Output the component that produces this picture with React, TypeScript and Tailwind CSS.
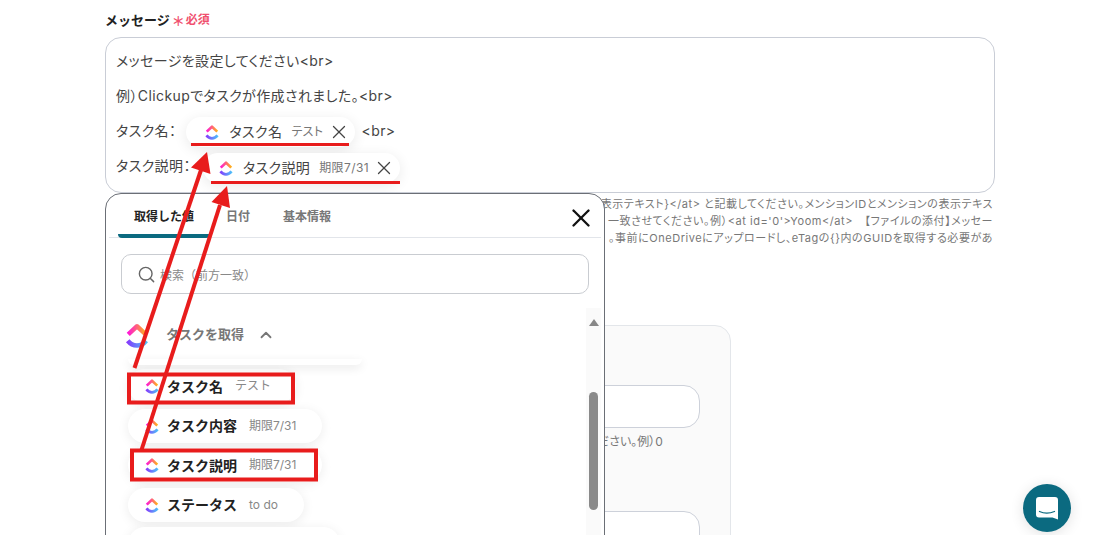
import { ChevronUp, Search, X } from 'lucide-react';

const FONT = "font-['Inter','Noto_Sans_CJK_JP',sans-serif]";

function ClickUpLogo({ size = 18 }: { size?: number }) {
  return (
    <svg width={size} height={size} viewBox="0 0 24 24" fill="none" className="shrink-0">
      <defs>
        <linearGradient id="cu-top" x1="3" y1="10" x2="21" y2="10" gradientUnits="userSpaceOnUse">
          <stop offset="0" stopColor="#ff02f0" />
          <stop offset="1" stopColor="#ffc800" />
        </linearGradient>
        <linearGradient id="cu-bottom" x1="3" y1="19" x2="21" y2="19" gradientUnits="userSpaceOnUse">
          <stop offset="0" stopColor="#8930fd" />
          <stop offset="1" stopColor="#49ccf9" />
        </linearGradient>
      </defs>
      <path d="M5 11.5 12 5l7 6.5" stroke="url(#cu-top)" strokeWidth="3.6" strokeLinejoin="round" />
      <path d="M4.6 16.6C6.5 19 9 20.4 12 20.4s5.5-1.4 7.4-3.8" stroke="url(#cu-bottom)" strokeWidth="3.6" />
    </svg>
  );
}

function ValueChip({ label, value, pad }: { label: string; value: string; pad: string }) {
  return (
    <span className={`flex h-[30px] items-center rounded-full bg-white pr-[5px] shadow-[0_3px_14px_rgba(0,0,0,0.09)] ${pad}`}>
      <ClickUpLogo />
      <span className="ml-[8px] text-[14px] text-[#444] [font-feature-settings:'palt']">{label}</span>
      <span className="ml-[9px] text-[12px] text-[#777] [font-feature-settings:'palt']">{value}</span>
      <X size={22} strokeWidth={1.4} className="ml-[4px] text-[#444]" />
    </span>
  );
}

function ListChip({ label, value, width }: { label: string; value: string; width: string }) {
  return (
    <div className={`flex h-[34px] items-center rounded-full bg-white pl-[15px] shadow-[0_2px_12px_rgba(0,0,0,0.08)] ${width}`}>
      <ClickUpLogo />
      <span className="ml-[6px] text-[14px] font-bold text-[#222]">{label}</span>
      <span className="ml-[12px] text-[12px] text-[#888]">{value}</span>
    </div>
  );
}

function HelpLine({ text }: { text: string }) {
  return <div className="flex h-[17px] justify-end whitespace-nowrap text-[11px] leading-[17px] tracking-[0.55px] text-[#777] [font-feature-settings:'palt']">{text}</div>;
}

function VariablePopup() {
  return (
    <div className="absolute left-[105px] top-[193px] h-[360px] w-[500px] rounded-t-2xl border border-[#6b6f76] bg-white">
      <div className="mx-[3px] flex h-[44px] items-start border-b border-[#e2e5ea] pl-[9px] pr-[5px]">
        <div className="flex h-[44px] w-[92px] justify-center rounded-b-sm border-b-[4px] border-[#0b6a80] pt-[14px] text-[12px] font-bold leading-[18px] text-[#222]">取得した値</div>
        <div className="ml-[16px] pt-[14px] text-[12px] font-bold leading-[18px] text-[#777]">日付</div>
        <div className="ml-[33px] pt-[14px] text-[12px] font-bold leading-[18px] text-[#777]">基本情報</div>
        <X size={30} strokeWidth={1.9} className="ml-auto mt-[9px] text-[#111]" />
      </div>
      <div className="mx-[15px] mt-[16px] flex h-[40px] items-center rounded-[10px] border border-[#c9ccd1] pl-[15px]">
        <Search size={19} strokeWidth={1.8} className="text-[#666]" />
        <span className="ml-[4px] mt-[3px] text-[12px] text-[#888]">検索（前方一致）</span>
      </div>
      <div className="relative mt-[16px]">
        <div className="ml-[16px] flex h-[49px] items-center">
          <ClickUpLogo size={30} />
          <span className="ml-[14px] text-[13px] font-bold text-[#777]">タスクを取得</span>
          <ChevronUp size={18} strokeWidth={2.4} className="ml-[13px] text-[#777]" />
        </div>
        <div className="h-[6px] w-[234px] translate-x-[22px] rounded-b-xl bg-white shadow-[0_3px_10px_rgba(0,0,0,0.1)]" />
        <div className="ml-[22px] mt-[4px] flex flex-col gap-[5.5px]">
          <ListChip label="タスク名" value="テスト" width="w-[168px]" />
          <ListChip label="タスク内容" value="期限7/31" width="w-[194px]" />
          <ListChip label="タスク説明" value="期限7/31" width="w-[194px]" />
          <ListChip label="ステータス" value="to do" width="w-[176px]" />
          <ListChip label="" value="" width="w-[212px]" />
        </div>
        {/* scrollbar */}
        <div className="absolute right-[3px] top-[-2px] h-[240px] w-[15px] bg-[#fafafa]">
          <div className="mx-auto mt-[11px] h-0 w-0 border-x-[5px] border-b-[7px] border-x-transparent border-b-[#888]" />
          <div className="mx-auto mt-[66px] h-[118px] w-[9px] rounded-full bg-[#8a8a8a]" />
        </div>
      </div>
    </div>
  );
}

function Annotations() {
  return (
    <svg width="1093" height="535" viewBox="0 0 1093 535" fill="none" className="pointer-events-none absolute left-0 top-0">
      <rect x="191" y="143" width="158" height="3" fill="#e81c1c" />
      <rect x="211" y="181" width="189" height="3" fill="#e81c1c" />
      <rect x="129" y="374.5" width="164" height="28" stroke="#e81c1c" strokeWidth="4" />
      <rect x="132" y="450.5" width="184" height="29" stroke="#e81c1c" strokeWidth="4" />
      <path d="M134.5 368 201 170" stroke="#e81c1c" strokeWidth="4" />
      <path d="M207 152 210.5 174 191 167.5Z" fill="#e81c1c" />
      <path d="M141.500 450 220 205" stroke="#e81c1c" strokeWidth="4" />
      <path d="M227 186 230 208 211.500 202Z" fill="#e81c1c" />
    </svg>
  );
}

function ChatButton() {
  return (
    <div className="absolute left-[1023px] top-[484px] flex h-[48px] w-[48px] items-center justify-center rounded-full bg-[#0b6a80] shadow-[0_2px_14px_rgba(0,0,0,0.12)]">
      <svg width="24" height="24" viewBox="0 0 24 24" fill="none">
        <path d="M4 1h16a3 3 0 0 1 3 3v19.500l-5.500-2H4a3 3 0 0 1-3-3V4a3 3 0 0 1 3-3Z" fill="#fff" />
        <path d="M4.500 15.500c4.500 2 10 2 15 0" stroke="#0b6a80" strokeWidth="1.300" strokeLinecap="round" />
      </svg>
    </div>
  );
}

export default function App() {
  return (
    <div className={`relative h-[535px] w-[1093px] overflow-hidden bg-white ${FONT}`}>
      <div className="ml-[105px] w-[890px] pt-[11px]">
        <div className="flex h-[18px] items-center">
          <span className="text-[13px] font-bold leading-[18px] text-[#222]">メッセージ</span>
          <span className="ml-[2px] mt-[2px] text-[13px] font-bold leading-[18px] text-[#f0506e]">＊</span>
          <span className="ml-[1px] text-[12px] font-bold leading-[18px] text-[#f0506e]">必須</span>
        </div>
        <div className="mt-[8px] h-[156px] rounded-2xl border border-[#c9cdd6] pl-[10px] pt-[5px] text-[14px] leading-[35px] tracking-[0.4px] text-[#444] [font-feature-settings:'palt']">
          <div>メッセージを設定してください&lt;br&gt;</div>
          <div>例）Clickupでタスクが作成されました。&lt;br&gt;</div>
          <div className="flex h-[35px] items-center">
            <span>タスク名：</span>
            <span className="ml-[10px] mt-[2px]"><ValueChip label="タスク名" value="テスト" pad="pl-[17px]" /></span>
            <span className="ml-[7px]">&lt;br&gt;</span>
          </div>
          <div className="flex h-[35px] items-center">
            <span>タスク説明：</span>
            <span className="ml-[12px] mt-[4px]"><ValueChip label="タスク説明" value="期限7/31" pad="pl-[14px]" /></span>
          </div>
        </div>
        <div className="mt-[3px] pr-[2px]">
          <HelpLine text="表示テキスト}</at> と記載してください。メンションIDとメンションの表示テキス" />
          <HelpLine text="一致させてください。例）<at id='0'>Yoom</at>　【ファイルの添付】メッセー" />
          <HelpLine text="。事前にOneDriveにアップロードし、eTagの{}内のGUIDを取得する必要があ" />
        </div>
        <div className="ml-[200px] mt-[78px] h-[300px] w-[426px] rounded-2xl border border-[#e3e6ea] bg-[#fafafa] pr-[30px] pt-[59px]">
          <div className="h-[43px] rounded-2xl border border-[#cdd1da] bg-white" />
          <div className="mt-[5px] pl-[291px] text-[12px] leading-[18px] text-[#777] [font-feature-settings:'palt']">ださい。例）0</div>
          <div className="mt-[60px] h-[43px] rounded-2xl border border-[#cdd1da] bg-white" />
        </div>
      </div>
      <VariablePopup />
      <Annotations />
      <ChatButton />
    </div>
  );
}
